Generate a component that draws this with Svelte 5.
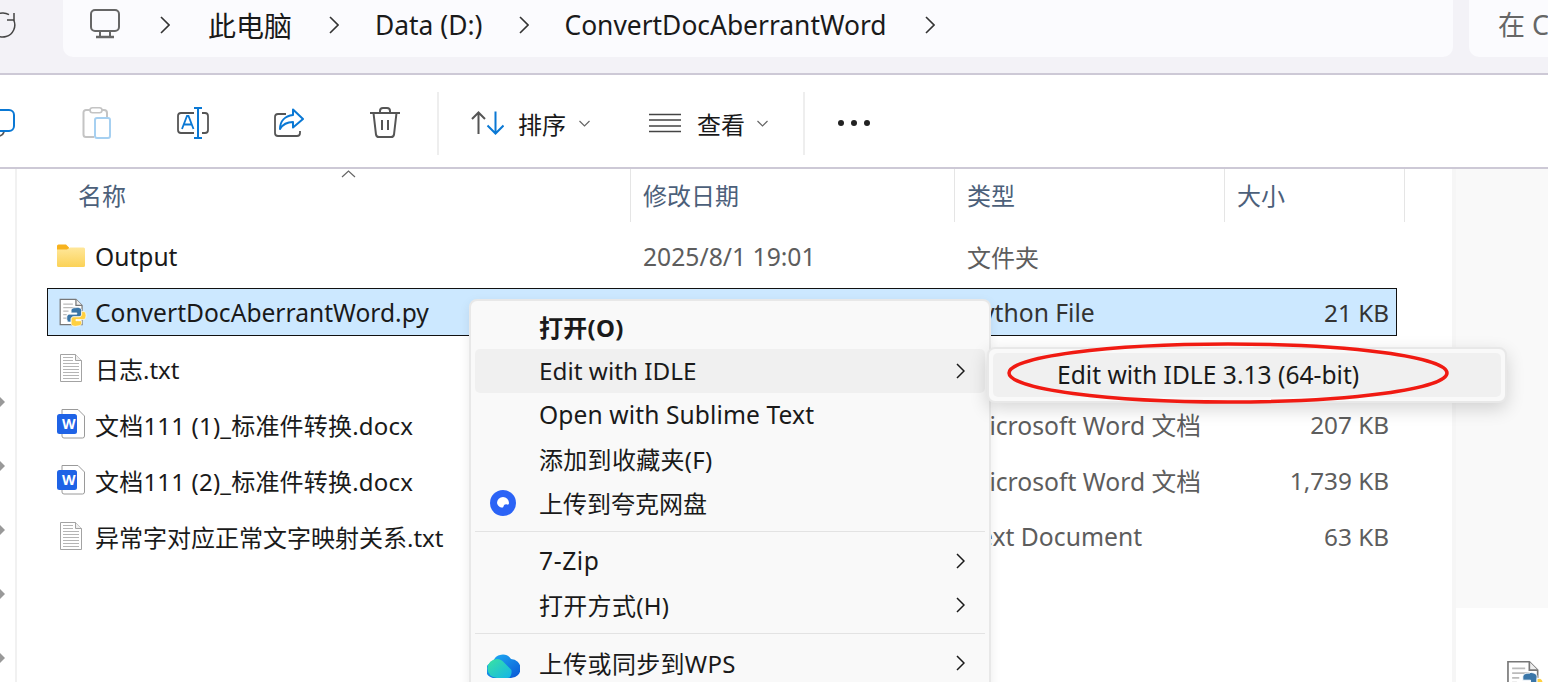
<script>
  const files = [
    { icon: "folder", name: "Output", nameCls: "lat", date: "2025/8/1 19:01", type: "文件夹", typeCls: "cjk", size: "" },
    { icon: "py", name: "ConvertDocAberrantWord.py", nameCls: "lat", date: "", type: "Python File", size: "21 KB", selected: true },
    { icon: "txt", name: "日志.txt", date: "", type: "", size: "" },
    { icon: "word", name: "文档111 (1)_标准件转换.docx", nameCls: "mix", date: "", type: "Microsoft Word 文档", size: "207 KB" },
    { icon: "word", name: "文档111 (2)_标准件转换.docx", nameCls: "mix", date: "", type: "Microsoft Word 文档", size: "1,739 KB" },
    { icon: "txt", name: "异常字对应正常文字映射关系.txt", date: "", type: "Text Document", size: "63 KB" },
  ];
  const arrows = [0, 1, 2, 3, 4];
</script>

{#snippet chevron()}
  <svg class="chev" width="10" height="18" viewBox="0 0 10 18"><path d="M1 1l8 8-8 8" fill="none" stroke="#333" stroke-width="1.6"/></svg>
{/snippet}

{#snippet down()}
  <svg class="down" width="11" height="7" viewBox="0 0 11 7"><path d="M.5 1l5 5 5-5" fill="none" stroke="#666" stroke-width="1.2"/></svg>
{/snippet}

{#snippet menuArrow()}
  <svg class="marrow" width="9" height="16" viewBox="0 0 9 16"><path d="M1 1l7 7-7 7" fill="none" stroke="#1a1a1a" stroke-width="1.5"/></svg>
{/snippet}

{#snippet pyDoc(size)}
  <svg class="pydoc" width={size} height={size} viewBox="0 0 32 32">
    <path d="M2.5 1.500h18l7 7v22h-25z" fill="#fff" stroke="#777" stroke-width="1.4"/>
    <path d="M20.5 1.500v7h7" fill="#eee" stroke="#777" stroke-width="1.4"/>
    <path d="M6 7h11M6 11h15M6 15h6M6 19h4M6 23h4" stroke="#bbb" stroke-width="1.4"/>
    <path d="M21 11c-5 0-6 1.500-6 3.500V17h6.500v1.500H13c-2 0-3 1.500-3 4.500s1 4.500 3 4.500h2v-3c0-1.500 1-3 3-3h6c2 0 3-1 3-3v-4.500c0-2-2-3.500-6-3.500z" fill="#3a76a8" stroke="#fff" stroke-width=".8"/>
    <path d="M21 11c-5 0-6 1.500-6 3.500V17h6.500v1.500H13c-2 0-3 1.500-3 4.500s1 4.500 3 4.500h2v-3c0-1.500 1-3 3-3h6c2 0 3-1 3-3v-4.500c0-2-2-3.500-6-3.500z" fill="#ffd040" stroke="#fff" stroke-width=".8" transform="rotate(180 21 21.500)"/>
  </svg>
{/snippet}

{#snippet fileIcon(kind)}
  {#if kind === "folder"}
    <svg width="28" height="24" viewBox="0 0 28 24">
      <path d="M0 2a1.500 1.500 0 0 1 1.500-1.500h7.500l3 3v3h-12z" fill="#f7b21d"/>
      <path d="M0 5.500h10l3-2h13.500a1.500 1.500 0 0 1 1.500 1.500v16.500a1.500 1.500 0 0 1-1.500 1.500h-25a1.500 1.500 0 0 1-1.500-1.500z" fill="url(#fold)"/>
      <defs><linearGradient id="fold" x1="0" y1="0" x2="0" y2="1"><stop offset="0" stop-color="#ffe79a"/><stop offset="1" stop-color="#fbd257"/></linearGradient></defs>
    </svg>
  {:else if kind === "py"}
    <span class="inset-py">{@render pyDoc(28)}</span>
  {:else if kind === "txt"}
    <svg class="inset-txt" width="22" height="28" viewBox="0 0 22 28">
      <path d="M.5.500h15l6 6v21h-21z" fill="#fff" stroke="#a3a3a3"/>
      <path d="M15.500.500v6h6" fill="#eee" stroke="#a3a3a3"/>
      <path d="M3 3.500h10M3 6.500h10M3 9.500h16M3 12.500h16M3 15.500h16M3 18.500h16M3 21.500h16M3 24.500h16" stroke="#b5b5b5"/>
    </svg>
  {:else}
    <span class="word">
      <svg width="28" height="30" viewBox="0 0 28 30">
        <path d="M5 .500h16l6.500 6.500v20a2 2 0 0 1-2 2h-18.500a2 2 0 0 1-2-2z" fill="#fff" stroke="#9a9a9a"/>
        <rect x="0" y="5" width="20" height="20" rx="2.500" fill="#1f63e6"/>
      </svg>
      <b>W</b>
    </span>
  {/if}
{/snippet}

<div class="page">
  <header class="top">
    <div class="refresh">
      <svg width="26" height="26" viewBox="0 0 26 26" fill="none" stroke="#444" stroke-width="1.5">
        <path d="M19 2.600A12 12 0 0 0 13 1M23.700 8A12 12 0 1 1 13 1"/>
        <path d="M24 1v7h-7"/>
      </svg>
    </div>
    <nav class="address">
      <svg class="pc" width="30" height="30" viewBox="0 0 30 30">
        <rect x="1" y="1" width="28" height="21" rx="4" fill="none" stroke="#666" stroke-width="2"/>
        <path d="M10 22v5M20 22v5" stroke="#666" stroke-width="2"/>
        <path d="M6 28h18" stroke="#666" stroke-width="2.500"/>
      </svg>
      {@render chevron()}
      <span class="crumb a">此电脑</span>
      {@render chevron()}
      <span class="crumb b">Data (D:)</span>
      {@render chevron()}
      <span class="crumb c">ConvertDocAberrantWord</span>
      {@render chevron()}
    </nav>
    <div class="search">在 C</div>
  </header>

  <div class="toolbar">
    <div class="tool first">
      <svg width="30" height="30" viewBox="0 0 30 30"><rect x="2" y="2" width="26" height="21" rx="5" fill="none" stroke="#0a78d4" stroke-width="2"/><path d="M18 24q-1 3-4 4" fill="none" stroke="#555" stroke-width="1.800"/></svg>
    </div>
    <div class="tool">
      <svg width="30" height="32" viewBox="0 0 30 32">
        <path d="M9 3H4a2.500 2.500 0 0 0-2.500 2.500v22A2.500 2.500 0 0 0 4 30h8" fill="none" stroke="#c4c4c4" stroke-width="2"/>
        <rect x="8" y=".8" width="12" height="5" rx="2.500" fill="none" stroke="#c4c4c4" stroke-width="1.600"/>
        <path d="M20 3h2a3 3 0 0 1 3 3v4" fill="none" stroke="#c4c4c4" stroke-width="2"/>
        <rect x="13" y="11" width="15" height="20" rx="2" fill="none" stroke="#a6d0f1" stroke-width="2"/>
      </svg>
    </div>
    <div class="tool">
      <svg width="32" height="32" viewBox="0 0 32 32">
        <path d="M17 6H4a3 3 0 0 0-3 3v14a3 3 0 0 0 3 3h13M25 6h3a3 3 0 0 1 3 3v14a3 3 0 0 1-3 3h-3" fill="none" stroke="#555" stroke-width="1.800"/>
        <path d="M5 22l5-13h1.500l5 13M7 17.500h8" fill="none" stroke="#0a78d4" stroke-width="1.800"/>
        <path d="M21 1v30M17 1h8M17 31h8" fill="none" stroke="#0a78d4" stroke-width="2"/>
      </svg>
    </div>
    <div class="tool">
      <svg width="30" height="30" viewBox="0 0 30 30">
        <path d="M12 6H4a3 3 0 0 0-3 3v16a3 3 0 0 0 3 3h19a3 3 0 0 0 3-3v-2" fill="none" stroke="#555" stroke-width="1.800"/>
        <path d="M19 1.500L29 11 19 19.500V14c-6 0-10 2-13 7 0-8 5-13 13-14z" fill="none" stroke="#0a78d4" stroke-width="2" stroke-linejoin="round"/>
      </svg>
    </div>
    <div class="tool">
      <svg width="30" height="32" viewBox="0 0 30 32" fill="none" stroke="#555" stroke-width="2">
        <path d="M0 6h30M10 6V4a3 3 0 0 1 3-3h4a3 3 0 0 1 3 3v2M3.500 6L6 27.500A3 3 0 0 0 9 30h12a3 3 0 0 0 3-2.500L26.500 6"/>
        <path d="M12 13v10M18 13v10"/>
      </svg>
    </div>
    <span class="sep"></span>
    <div class="tool wide sort">
      <svg width="33" height="24" viewBox="0 0 33 24" fill="none" stroke-width="2">
        <path d="M7.500 23V1.500M1 8l6.500-6.500L14 8" stroke="#555"/>
        <path d="M24.500 .5V22.500M16.500 14.500l8 8 8-8" stroke="#0a78d4"/>
      </svg>
      <span class="tlabel">排序</span>
      {@render down()}
    </div>
    <div class="tool wide view">
      <svg width="32" height="20" viewBox="0 0 32 20"><path d="M0 1.500h32M0 7h32M0 13h32M0 18.500h32" stroke="#444" stroke-width="1.500"/></svg>
      <span class="tlabel">查看</span>
      {@render down()}
    </div>
    <span class="sep"></span>
    <div class="dots"><i></i><i></i><i></i></div>
  </div>

  <div class="body">
    <aside class="nav">
      {#each arrows as a}
        <span class="tri"></span>
      {/each}
    </aside>

    <main class="pane">
      <div class="head">
        <div class="hcol name">名称<svg class="caret" width="15" height="8" viewBox="0 0 15 8"><path d="M1 7l6.500-6 6.500 6" fill="none" stroke="#666" stroke-width="1.200"/></svg></div>
        <div class="hcol date">修改日期</div>
        <div class="hcol type">类型</div>
        <div class="hcol size">大小</div>
      </div>
      <div class="rows">
        {#each files as f}
          <div class="row" class:selected={f.selected}>
            <span class="ficon">{@render fileIcon(f.icon)}</span>
            <span class="fname {f.nameCls ?? ''}">{f.name}</span>
            <span class="meta">{f.date}</span>
            <span class="meta {f.typeCls ?? ''}">{f.type}</span>
            <span class="meta fsize">{f.size}</span>
          </div>
        {/each}
      </div>
    </main>

    <aside class="side">
      <div class="preview"></div>
      <div class="thumb">{@render pyDoc(38)}</div>
    </aside>
  </div>

  <div class="menu">
    <div class="mi strong mix">打开(O)</div>
    <div class="mi hover edit">Edit with IDLE{@render menuArrow()}</div>
    <div class="mi lat">Open with Sublime Text</div>
    <div class="mi mix">添加到收藏夹(F)</div>
    <div class="mi">
      <svg class="micon" width="28" height="28" viewBox="0 0 28 28">
        <circle cx="14" cy="14" r="13" fill="#2b63f6"/>
        <path d="M8 14a6 6 0 0 1 12 0c0 1-.5 2-2 1.500-2-.5-3 .5-3.500 2-.5 1.500-1.500 1-2.500 1a6 6 0 0 1-4-4.500z" fill="#fff"/>
      </svg>
      上传到夸克网盘
    </div>
    <div class="msep"></div>
    <div class="mi zip">7-Zip{@render menuArrow()}</div>
    <div class="mi mix">打开方式(H){@render menuArrow()}</div>
    <div class="msep"></div>
    <div class="mi mix">
      <svg class="micon cloud" width="33" height="28" viewBox="0 0 33 28">
        <defs>
          <linearGradient id="c1" x1="0" y1="0" x2="1" y2="1"><stop offset="0" stop-color="#1fb4f7"/><stop offset="1" stop-color="#0a55d4"/></linearGradient>
          <linearGradient id="c2" x1="0" y1="0" x2="1" y2="1"><stop offset="0" stop-color="#3be3a0"/><stop offset="1" stop-color="#12b5e8"/></linearGradient>
        </defs>
        <path d="M8 28a8 8 0 0 1-2-16A10 10 0 0 1 24 9a9.500 9.500 0 0 1 0 19z" fill="url(#c1)"/>
        <path d="M10 9c3 0 5 1.500 7 3.500l7 7c1.500 1.500 0 8.500-3 8.500H10a9.500 9.500 0 0 1 0-19z" fill="url(#c2)"/>
      </svg>
      上传或同步到WPS{@render menuArrow()}
    </div>
  </div>

  <div class="submenu">
    <div class="si">Edit with IDLE 3.13 (64-bit)</div>
  </div>

  <svg class="ring" width="450" height="70" viewBox="0 0 450 70">
    <ellipse cx="225" cy="35" rx="219" ry="29" fill="none" stroke="#f01a12" stroke-width="3.500"/>
  </svg>
</div>

<style>
  :global(body) {
    overflow: hidden;
  }

  .page {
    position: relative;
    width: 1548px;
    height: 682px;
    overflow: hidden;
    background: #fff;
    color: #1a1a1a;
    font-family: "Noto Sans", "Noto Sans CJK SC", sans-serif;
    font-size: 24px;
  }

  .top {
    display: flex;
    height: 73px;
    background: #f3f2f7;
    border-bottom: 2px solid #cdc9d6;
  }

  .refresh {
    width: 63px;
    padding-top: 12px;
    box-sizing: border-box;
    flex: none;
  }

  .refresh svg {
    margin-left: -10px;
  }

  .address {
    display: flex;
    align-items: center;
    width: 1390px;
    height: 57px;
    padding: 0 0 7px 27px;
    margin-right: 16px;
    flex: none;
    box-sizing: border-box;
    background: #fbfbfe;
    border-radius: 0 0 10px 10px;
  }

  .pc {
    margin: -3px 40px 0 0;
    flex: none;
  }

  .crumb {
    font-size: 26.4px;
    white-space: nowrap;
  }

  .crumb.a {
    margin: 0 37px 0 38px;
    font-size: 28px;
  }

  .crumb.b {
    margin: 0 37px 0 36px;
  }

  .crumb.c {
    margin: 0 38px 0 35px;
  }

  .chev {
    flex: none;
  }

  .search {
    flex: 1;
    height: 57px;
    padding-left: 29px;
    line-height: 50px;
    font-size: 27px;
    color: #666;
    background: #fbfbfe;
    border-radius: 0 0 0 10px;
    white-space: nowrap;
  }

  .toolbar {
    display: flex;
    align-items: center;
    height: 88px;
    padding-top: 4px;
    border-bottom: 2px solid #cdc9d6;
  }

  .tool {
    display: flex;
    align-items: center;
    justify-content: center;
    width: 96px;
    height: 100%;
    flex: none;
  }

  .tool.first {
    margin-left: -47px;
  }

  .tool.wide {
    justify-content: flex-start;
    width: auto;
  }

  .sep {
    width: 2px;
    height: 63px;
    margin-left: 4px;
    background: #eee;
    flex: none;
  }

  .tool.sort {
    margin-left: 32px;
  }

  .tool.view {
    margin-left: 59px;
  }

  .tool.view + .sep {
    margin-left: 35px;
  }

  .tlabel {
    margin: 0 12px 0 16px;
    font-size: 24px;
  }

  .sort .tlabel {
    margin: 0 13px 0 14px;
  }

  .dots {
    display: flex;
    gap: 7px;
    margin-left: 33px;
  }

  .dots i {
    width: 6px;
    height: 6px;
    border-radius: 50%;
    background: #222;
  }

  .body {
    display: flex;
    height: 513px;
  }

  .nav {
    display: flex;
    flex-direction: column;
    gap: 52px;
    width: 15px;
    padding-top: 227px;
    flex: none;
    border-right: 2px solid #f1f1f1;
  }

  .tri {
    width: 0;
    height: 12px;
    border-left: 6px solid #999;
    border-top: 6px solid transparent;
    border-bottom: 6px solid transparent;
    box-sizing: border-box;
    margin-left: -1px;
  }

  .pane {
    width: 1433px;
    flex: none;
  }

  .head {
    display: grid;
    grid-template-columns: 614px 324px 270px 180px;
    height: 50px;
    color: #4c607a;
  }

  .hcol {
    position: relative;
    padding-left: 12px;
    line-height: 53px;
    border-right: 1px solid #e5e5e5;
    box-sizing: border-box;
  }

  .hcol.name {
    padding-left: 61px;
  }

  .caret {
    position: absolute;
    left: 324px;
    top: 1px;
  }

  .rows {
    display: flex;
    flex-direction: column;
    gap: 8px;
    margin: 13px 0 0 30px;
    width: 1350px;
  }

  .row {
    display: grid;
    grid-template-columns: 48px 548px 324px 1fr auto;
    align-items: center;
    height: 48px;
    padding-right: 8px;
    box-sizing: border-box;
    white-space: nowrap;
  }

  .row.selected {
    background: #cce8ff;
    box-shadow: inset 0 0 0 1px #111;
  }

  .ficon {
    display: flex;
    padding-left: 10px;
  }

  .inset-py {
    display: block;
    height: 28px;
    margin-left: 1px;
  }

  .pydoc {
    overflow: visible;
  }

  .inset-txt {
    margin-left: 3px;
  }

  .word {
    position: relative;
    display: block;
    height: 30px;
  }

  .word b {
    position: absolute;
    left: 5px;
    top: 5px;
    font: bold 14px/20px "Noto Sans", sans-serif;
    color: #fff;
  }

  .fname.lat {
    font-size: 24.6px;
  }

  .fname.mix {
    letter-spacing: 0.2px;
  }

  .meta {
    font-size: 24.7px;
    color: #5d5d5d;
  }

  .meta.cjk {
    font-size: 24px;
  }

  .selected .meta {
    color: #333;
  }

  .fsize {
    font-size: 24.3px;
    text-align: right;
  }

  .side {
    position: relative;
    flex: 1;
    margin-left: 2px;
    border-left: 4px solid #f6f6f6;
  }

  .preview {
    height: 439px;
    background: #f9f9f9;
  }

  .thumb {
    position: absolute;
    left: 49px;
    top: 491px;
  }

  .menu {
    position: absolute;
    left: 469px;
    top: 299px;
    width: 522px;
    height: 400px;
    padding: 4px 4px 0;
    box-sizing: border-box;
    background: #f9f9f9;
    border: 2px solid #e8e8e8;
    border-radius: 8px;
    box-shadow: 0 4px 12px rgba(0, 0, 0, 0.08);
  }

  .mi {
    position: relative;
    display: flex;
    align-items: center;
    height: 44px;
    padding: 0 0 2px 64px;
    box-sizing: border-box;
    border-radius: 5px;
    white-space: nowrap;
  }

  .mi.hover {
    background: #f0f0f0;
  }

  .mi.strong {
    font-weight: 700;
  }

  .mi.mix {
    letter-spacing: 0.3px;
  }

  .mi.lat {
    font-size: 24.6px;
    letter-spacing: 0.1px;
  }

  .mi.edit {
    font-size: 24.3px;
  }

  .mi.zip {
    font-size: 24.6px;
    letter-spacing: 0.6px;
  }

  .marrow {
    position: absolute;
    right: 20px;
    top: 14px;
  }

  .micon {
    position: absolute;
    left: 14px;
    top: 8px;
  }

  .micon.cloud {
    left: 12px;
    top: 9px;
  }

  .msep {
    height: 1px;
    margin: 6px 0 7px;
    background: #e3e3e3;
  }

  .submenu {
    position: absolute;
    left: 987px;
    top: 347px;
    width: 520px;
    height: 56px;
    padding: 4px 4px;
    box-sizing: border-box;
    background: #f9f9f9;
    border: 2px solid #e8e8e8;
    border-radius: 8px;
    box-shadow: 0 6px 18px rgba(0, 0, 0, 0.16);
  }

  .si {
    height: 44px;
    padding-left: 64px;
    font-size: 24.6px;
    line-height: 44px;
    background: #f0f0f0;
    border-radius: 5px;
    white-space: nowrap;
  }

  .ring {
    position: absolute;
    left: 1003px;
    top: 338px;
  }
</style>
